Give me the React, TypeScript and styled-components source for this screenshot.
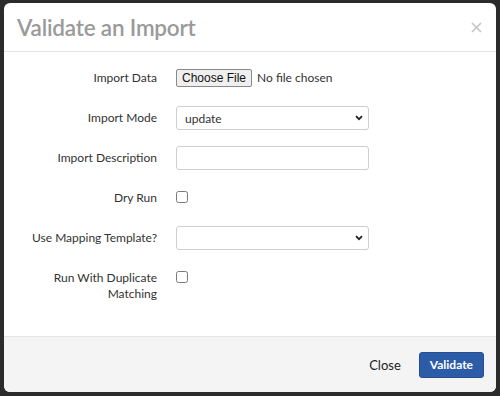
import React from "react";
import styled, { createGlobalStyle } from "styled-components";

const GlobalStyle = createGlobalStyle`
  html, body {
    margin: 0;
    padding: 0;
    background: #2b2b2b;
    font-family: Lato, "Open Sans", sans-serif;
  }
`;

const Backdrop = styled.div`
  box-sizing: border-box;
  width: 500px;
  height: 396px;
  padding: 3px 4px 4px 4px;
`;

const Modal = styled.div`
  display: flex;
  flex-direction: column;
  height: 100%;
  background: #fff;
  border-radius: 6px;
  overflow: hidden;
`;

const Header = styled.div`
  display: flex;
  align-items: center;
  justify-content: space-between;
  height: 48px;
  padding: 0 14px 0 13px;
  border-bottom: 1px solid #e5e5e5;
`;

const Title = styled.h4`
  margin: 0;
  font-size: 22.5px;
  font-weight: 600;
  color: #9a9a9a;
  letter-spacing: -0.2px;
`;

const CloseX = styled.button`
  border: 0;
  background: none;
  padding: 0;
  width: 12px;
  height: 12px;
  cursor: pointer;
`;

const Body = styled.form`
  flex: 1;
  display: flex;
  flex-direction: column;
  gap: 16px;
  padding: 14px 16px 0 16px;
`;

const Row = styled.div`
  display: flex;
  align-items: flex-start;
  gap: 19px;
  min-height: 24px;
`;

const Label = styled.label`
  flex: 0 0 137px;
  box-sizing: border-box;
  padding-top: 4px;
  text-align: right;
  font-size: 12px;
  line-height: 16px;
  color: #333;
`;

const Control = styled.div`
  position: relative;
  width: 193px;
  display: flex;
  align-items: center;
  min-height: 24px;
`;

const FileInput = styled.input`
  font-family: Lato, "Open Sans", sans-serif;
  font-size: 12px;
  color: #333;

  &::file-selector-button {
    font-family: "Liberation Sans", Arial, sans-serif;
    font-size: 12px;
    height: 18px;
    padding: 0 5px;
    margin-right: 5px;
    background: #efefef;
    border: 1px solid #8a8a8a;
    border-radius: 2px;
    color: #111;
  }
`;

const fieldBase = `
  box-sizing: border-box;
  width: 193px;
  height: 24px;
  border: 1px solid #cfcfcf;
  border-radius: 3px;
  background: #fff;
  font-family: Lato, "Open Sans", sans-serif;
  font-size: 12px;
  color: #333;
  outline: none;
`;

const Select = styled.select`
  ${fieldBase}
  appearance: none;
  padding: 0 24px 0 8px;
`;

const Chevron = styled.svg`
  position: absolute;
  right: 6px;
  top: 9px;
  pointer-events: none;
`;

const TextInput = styled.input`
  ${fieldBase}
  padding: 0 8px;
`;

const Checkbox = styled.input`
  appearance: none;
  box-sizing: border-box;
  width: 12px;
  height: 12px;
  margin: 5px 0 0 0;
  border: 1px solid #7a7a7a;
  border-radius: 2.5px;
  background: #fff;
  align-self: flex-start;
`;

const Footer = styled.div`
  display: flex;
  align-items: center;
  justify-content: flex-end;
  gap: 18px;
  height: 55px;
  padding: 0 12px 0 0;
  background: #f4f4f4;
  border-top: 1px solid #e4e4e4;
`;

const LinkButton = styled.button`
  border: 0;
  background: none;
  padding: 0;
  font-family: Lato, "Open Sans", sans-serif;
  font-size: 13px;
  color: #222;
  cursor: pointer;
`;

const PrimaryButton = styled.button`
  height: 26px;
  padding: 0 10px;
  border: 1px solid #244f93;
  border-radius: 3px;
  background: #2c5ca7;
  color: #fff;
  font-family: Lato, "Open Sans", sans-serif;
  font-size: 12px;
  font-weight: 700;
  cursor: pointer;
`;

const ChevronIcon = () => (
  <Chevron width="8" height="6" viewBox="0 0 8 6">
    <path d="M1 1.2 L4 4.2 L7 1.2" fill="none" stroke="#222" strokeWidth="1.8" />
  </Chevron>
);

const App = () => (
  <>
    <GlobalStyle />
    <Backdrop>
      <Modal>
        <Header>
          <Title>Validate an Import</Title>
          <CloseX aria-label="Close">
            <svg width="11" height="11" viewBox="0 0 11 11">
              <path d="M1 1 L10 10 M10 1 L1 10" stroke="#c4c4c4" strokeWidth="1.6" />
            </svg>
          </CloseX>
        </Header>
        <Body onSubmit={(e) => e.preventDefault()}>
          <Row>
            <Label>Import Data</Label>
            <Control>
              <FileInput type="file" />
            </Control>
          </Row>
          <Row>
            <Label>Import Mode</Label>
            <Control>
              <Select defaultValue="update">
                <option value="update">update</option>
                <option value="create">create</option>
              </Select>
              <ChevronIcon />
            </Control>
          </Row>
          <Row>
            <Label>Import Description</Label>
            <Control>
              <TextInput type="text" />
            </Control>
          </Row>
          <Row>
            <Label>Dry Run</Label>
            <Checkbox type="checkbox" />
          </Row>
          <Row>
            <Label>Use Mapping Template?</Label>
            <Control>
              <Select defaultValue="">
                <option value=""></option>
              </Select>
              <ChevronIcon />
            </Control>
          </Row>
          <Row>
            <Label>
              Run With Duplicate
              <br />
              Matching
            </Label>
            <Checkbox type="checkbox" />
          </Row>
        </Body>
        <Footer>
          <LinkButton>Close</LinkButton>
          <PrimaryButton>Validate</PrimaryButton>
        </Footer>
      </Modal>
    </Backdrop>
  </>
);

export default App;
